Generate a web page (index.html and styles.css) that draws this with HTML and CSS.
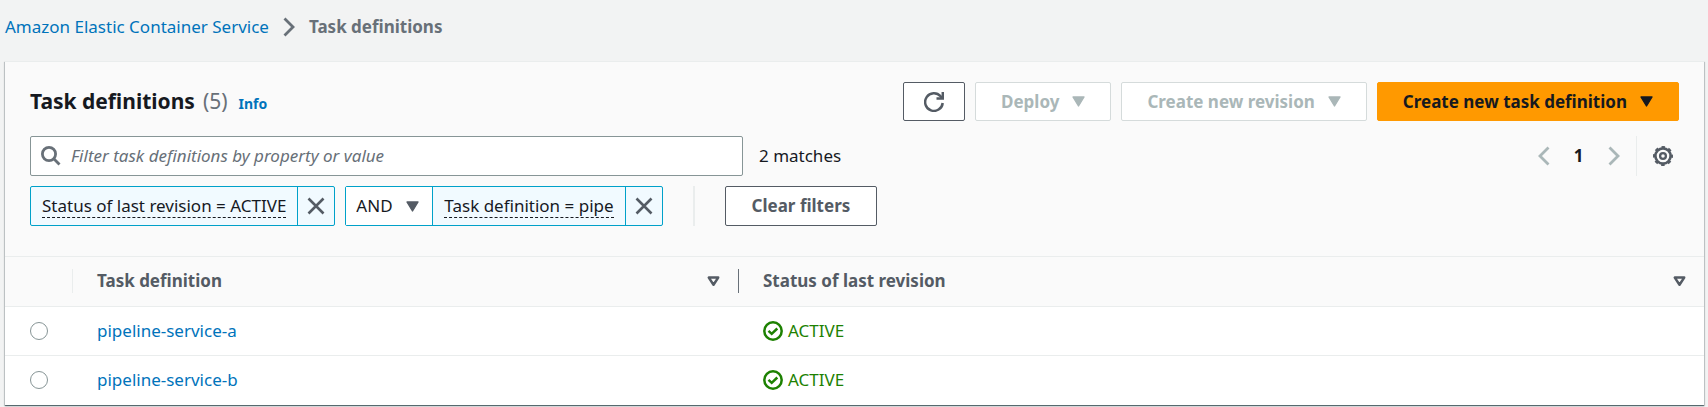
FILE: index.html
```html
<!DOCTYPE html>
<html lang="en">
<head>
<meta charset="utf-8">
<meta name="viewport" content="width=device-width, initial-scale=1">
<title>Task definitions</title>
<link rel="stylesheet" href="styles.css">
</head>
<body>
<svg class="sprite" aria-hidden="true">
  <symbol id="caret" viewBox="0 0 13 11"><path d="M1 1h11L6.500 10z" fill="currentColor" stroke="currentColor" stroke-width="1.400" stroke-linejoin="round"/></symbol>
  <symbol id="sort" viewBox="0 0 13 11"><path d="M1.800 1.600h9.400L6.500 8.800z" fill="none" stroke="currentColor" stroke-width="2.500" stroke-linejoin="round"/></symbol>
  <symbol id="close" viewBox="0 0 18 18"><path d="M1.500 1.500l15 15M16.500 1.500l-15 15" fill="none" stroke="currentColor" stroke-width="2.600"/></symbol>
  <symbol id="chevron" viewBox="0 0 12 20"><path d="M1.500 1.500L10 10l-8.500 8.500" fill="none" stroke="currentColor" stroke-width="2.800"/></symbol>
  <symbol id="success" viewBox="0 0 20 20"><g fill="none" stroke="currentColor" stroke-width="2.500"><circle cx="10" cy="10" r="8.700"/><path d="M5.500 9.800l3.200 3 5.600-5.300"/></g></symbol>
</svg>

<nav class="breadcrumbs" aria-label="Breadcrumbs">
  <a class="link" href="#">Amazon Elastic Container Service</a>
  <svg class="chevron"><use href="#chevron"/></svg>
  <span class="current">Task definitions</span>
</nav>

<main class="card">
  <header class="card-header">
    <div class="title-row">
      <div class="title">
        <h1>Task definitions <span class="count">(5)</span></h1>
        <a class="info" href="#">Info</a>
      </div>
      <div class="actions">
        <button class="button button-icon" type="button" aria-label="Refresh">
          <svg width="20" height="20" viewBox="0 0 20 20" fill="none" stroke="currentColor" stroke-width="2.500"><path d="M18.700 11a8.800 8.800 0 1 1-2.200-6.800L18 6"/><path d="M18.800 0v6.500H12.500"/></svg>
        </button>
        <button class="button" type="button" disabled>Deploy <svg class="caret"><use href="#caret"/></svg></button>
        <button class="button" type="button" disabled>Create new revision <svg class="caret"><use href="#caret"/></svg></button>
        <button class="button button-primary" type="button">Create new task definition <svg class="caret"><use href="#caret"/></svg></button>
      </div>
    </div>

    <div class="filter-row">
      <label class="search">
        <svg width="20" height="20" viewBox="0 0 20 20" fill="none" stroke="currentColor" stroke-width="2.800"><circle cx="8" cy="8" r="6.600"/><path d="M12.800 12.800l5.700 5.700"/></svg>
        <input type="text" placeholder="Filter task definitions by property or value" aria-label="Filter task definitions">
      </label>
      <span class="matches">2 matches</span>
      <div class="pagination">
        <button class="page-button" type="button" aria-label="Previous page" disabled><svg class="chevron previous"><use href="#chevron"/></svg></button>
        <button class="page-button page-number" type="button" aria-current="page">1</button>
        <button class="page-button" type="button" aria-label="Next page" disabled><svg class="chevron"><use href="#chevron"/></svg></button>
        <button class="settings" type="button" aria-label="Preferences">
          <svg width="20" height="20" viewBox="-10 -10 20 20" fill="none" stroke="currentColor"><circle r="7.600" stroke-width="2.600"/><circle r="9" stroke-width="2" stroke-dasharray="3.534 3.534" stroke-dashoffset="1.767"/><circle r="2.900" stroke-width="2.300"/></svg>
        </button>
      </div>
    </div>

    <div class="tokens">
      <div class="token">
        <button class="token-label" type="button"><span>Status of last revision = ACTIVE</span></button>
        <button class="token-remove" type="button" aria-label="Remove status filter"><svg width="18" height="18"><use href="#close"/></svg></button>
      </div>
      <div class="token">
        <div class="operator">
          <select aria-label="Filter operator"><option>AND</option><option>OR</option></select>
          <svg class="caret"><use href="#caret"/></svg>
        </div>
        <button class="token-label" type="button"><span>Task definition = pipe</span></button>
        <button class="token-remove" type="button" aria-label="Remove task definition filter"><svg width="18" height="18"><use href="#close"/></svg></button>
      </div>
      <div class="clear">
        <button class="button" type="button">Clear filters</button>
      </div>
    </div>
  </header>

  <table class="table">
    <colgroup><col class="col-select"><col class="col-name"><col></colgroup>
    <thead>
      <tr>
        <th scope="col"><div class="head head-select"></div></th>
        <th scope="col"><div class="head head-resize">Task definition <svg class="caret"><use href="#sort"/></svg></div></th>
        <th scope="col"><div class="head">Status of last revision <svg class="caret"><use href="#sort"/></svg></div></th>
      </tr>
    </thead>
    <tbody>
      <tr>
        <td class="select"><input type="radio" name="task" aria-label="pipeline-service-a"></td>
        <td><a class="link" href="#">pipeline-service-a</a></td>
        <td><span class="status"><svg width="20" height="20"><use href="#success"/></svg>ACTIVE</span></td>
      </tr>
      <tr>
        <td class="select"><input type="radio" name="task" aria-label="pipeline-service-b"></td>
        <td><a class="link" href="#">pipeline-service-b</a></td>
        <td><span class="status"><svg width="20" height="20"><use href="#success"/></svg>ACTIVE</span></td>
      </tr>
    </tbody>
  </table>
</main>
</body>
</html>
```

FILE: styles.css
```css
* {
  box-sizing: border-box;
}

body {
  min-height: 100vh;
  margin: 0;
  padding-bottom: 2px;
  background: #f2f3f3;
  color: #16191f;
  font: 17px/24px "Noto Sans", "Open Sans", sans-serif;
}

button,
input,
select {
  margin: 0;
  font: inherit;
  color: inherit;
}

button {
  padding: 0;
  border: 0;
  background: none;
  cursor: pointer;
}

svg {
  flex: none;
}

.sprite {
  display: none;
}

.link {
  color: #0073bb;
  text-decoration: none;
}

.caret {
  width: 13px;
  height: 11px;
}

.chevron {
  width: 12px;
  height: 20px;
}

.breadcrumbs {
  display: flex;
  align-items: center;
  gap: 14px;
  padding: 15px 5px 22px;
  color: #687078;
}

.current {
  font-weight: 700;
}

.card {
  margin: 0 4px 0 5px;
  background: #fff;
  border-top: 1px solid #eaeded;
  box-shadow: 0 1px 1px 0 rgba(0, 28, 36, 0.5), 1px 1px 1px 0 rgba(0, 28, 36, 0.15), -1px 1px 1px 0 rgba(0, 28, 36, 0.15);
}

.card-header {
  padding: 20px 25px 30px;
  background: #fafafa;
  border-bottom: 1px solid #eaeded;
}

.title-row,
.title,
.actions,
.filter-row,
.pagination,
.tokens {
  display: flex;
  align-items: center;
}

.title-row {
  justify-content: space-between;
  margin-bottom: 15px;
}

.title {
  align-items: baseline;
  gap: 11px;
}

h1 {
  display: flex;
  gap: 8px;
  margin: 0;
  font-size: 21px;
  line-height: 28px;
}

.count {
  color: #687078;
  font-weight: 400;
}

.info {
  color: #0073bb;
  font-size: 14px;
  font-weight: 700;
  text-decoration: none;
}

.actions {
  gap: 10px;
}

.button {
  display: flex;
  align-items: center;
  gap: 13px;
  height: 39px;
  padding: 0 25px;
  border: 1px solid #545b64;
  border-radius: 2px;
  background: #fff;
  color: #545b64;
  font-weight: 700;
  white-space: nowrap;
}

.button-icon {
  padding: 0 20px;
}

.button:disabled {
  border-color: #d5dbdb;
  color: #aab7b8;
}

.button-primary {
  border-color: #f90;
  background: #f90;
  color: #16191f;
}

.filter-row {
  gap: 16px;
  margin-bottom: 10px;
}

.search {
  display: flex;
  flex: 0 1 713px;
  align-items: center;
  gap: 10px;
  height: 40px;
  padding: 0 10px;
  border: 1px solid #879596;
  border-radius: 2px;
  background: #fff;
  color: #687078;
}

.search input {
  flex: 1;
  min-width: 0;
  padding: 0;
  border: 0;
  outline: 0;
  background: none;
  color: #16191f;
}

.search input::placeholder {
  color: #687078;
  font-style: italic;
}

.pagination {
  margin-left: auto;
}

.page-button {
  display: flex;
  align-items: center;
  justify-content: center;
  width: 35px;
  height: 40px;
  color: #aab7b8;
}

.page-number {
  color: #16191f;
  font-weight: 700;
}

.previous {
  transform: rotate(180deg);
}

.settings {
  display: flex;
  align-items: center;
  height: 40px;
  margin-left: 5px;
  padding: 0 6px 0 16px;
  border-left: 1px solid #eaeded;
  color: #545b64;
}

.tokens {
  gap: 10px;
}

.token {
  display: flex;
  height: 40px;
  border: 1px solid #00a1c9;
  border-radius: 2px;
  background: #f1faff;
}

.token-label {
  padding: 0 11px;
}

.token-label span {
  display: block;
  border-bottom: 1px dashed #16191f;
  line-height: 22px;
}

.token-remove {
  display: flex;
  align-items: center;
  padding: 0 9px;
  border-left: 1px solid #00a1c9;
  color: #545b64;
}

.operator {
  display: grid;
  align-items: center;
  border-right: 1px solid #00a1c9;
  background: #fff;
}

.operator select,
.operator svg {
  grid-area: 1 / 1;
}

.operator select {
  width: 86px;
  height: 38px;
  padding: 0 10px;
  border: 0;
  background: none;
  appearance: none;
}

.operator svg {
  justify-self: end;
  margin-right: 13px;
  color: #545b64;
  pointer-events: none;
}

.clear {
  margin-left: 20px;
  padding-left: 30px;
  border-left: 2px solid #eaeded;
}

.clear .button {
  height: 40px;
  padding: 0 26px;
}

.table {
  width: 100%;
  border-collapse: collapse;
  table-layout: fixed;
}

.col-select {
  width: 68px;
}

.col-name {
  width: 666px;
}

th {
  height: 49px;
  padding: 0;
  background: #fafafa;
  border-bottom: 1px solid #eaeded;
  color: #545b64;
  text-align: left;
}

.head {
  display: flex;
  align-items: center;
  justify-content: space-between;
  height: 24px;
  padding: 0 18px 0 24px;
}

.head-select {
  border-right: 1px solid #eaeded;
}

.head-resize {
  border-right: 1px solid #687078;
}

td {
  height: 49px;
  padding: 0 24px;
  border-bottom: 1px solid #eaeded;
}

.select {
  padding: 0 25px;
}

tbody tr:last-child td {
  height: 50px;
  border-bottom: 0;
}

.select input {
  display: block;
  width: 18px;
  height: 18px;
  border: 1px solid #879596;
  border-radius: 50%;
  background: #fff;
  appearance: none;
}

.select input:checked {
  border: 5px solid #0073bb;
}

.status {
  display: flex;
  align-items: center;
  gap: 5px;
  color: #1d8102;
}
```
